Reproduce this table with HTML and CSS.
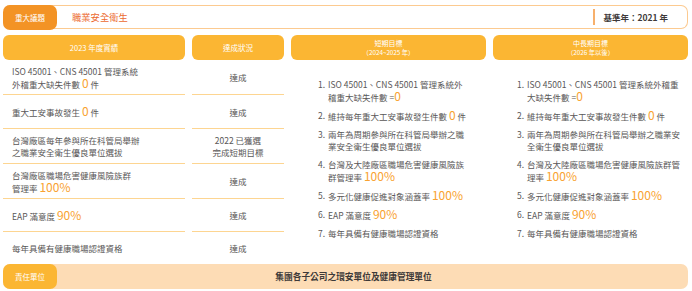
FILE: index.html
```html
<!DOCTYPE html>
<html lang="zh-Hant">
<head>
<meta charset="utf-8">
<link rel="stylesheet" href="styles.css">
</head>
<body>
<div class="page">
  <div class="topbar">
    <div class="tab">重大議題</div>
    <div class="title">職業安全衛生</div>
    <div class="sep"></div>
    <div class="base">基準年：2021 年</div>
  </div>

  <div class="table">
    <div class="th">2023 年度實績</div>
    <div class="th">達成狀況</div>
    <div class="th two"><span>短期目標</span><span class="sub">（2024~2025 年）</span></div>
    <div class="th two"><span>中長期目標</span><span class="sub">（2026 年以後）</span></div>

    <div class="cell c1 r1"><p>ISO 45001、CNS 45001 管理系統<br>外稽重大缺失件數 <span class="num">0</span> 件</p></div>
    <div class="cell c2 r1"><p>達成</p></div>

    <div class="cell c1 r2"><p>重大工安事故發生 <span class="num">0</span> 件</p></div>
    <div class="cell c2 r2"><p>達成</p></div>

    <div class="cell c1 r3"><p>台灣廠區每年參與所在科管局舉辦<br>之職業安全衛生優良單位選拔</p></div>
    <div class="cell c2 r3"><p>2022 已獲選<br>完成短期目標</p></div>

    <div class="cell c1 r4"><p>台灣廠區職場危害健康風險族群<br>管理率 <span class="num">100%</span></p></div>
    <div class="cell c2 r4"><p>達成</p></div>

    <div class="cell c1 r5"><p>EAP 滿意度 <span class="num">90%</span></p></div>
    <div class="cell c2 r5"><p>達成</p></div>

    <div class="cell c1 r6 last"><p>每年具備有健康職場認證資格</p></div>
    <div class="cell c2 r6 last"><p>達成</p></div>

    <div class="goals short">
      <ul class="list">
        <li><span class="n">1.</span><span class="t">ISO 45001、CNS 45001 管理系統外稽重大缺失件數 =<span class="num">0</span></span></li>
        <li><span class="n">2.</span><span class="t">維持每年重大工安事故發生件數 <span class="num">0</span> 件</span></li>
        <li><span class="n">3.</span><span class="t">兩年為周期參與所在科管局舉辦之職業安全衛生優良單位選拔</span></li>
        <li><span class="n">4.</span><span class="t">台灣及大陸廠區職場危害健康風險族群管理率 <span class="num">100%</span></span></li>
        <li><span class="n">5.</span><span class="t">多元化健康促進對象涵蓋率 <span class="num">100%</span></span></li>
        <li><span class="n">6.</span><span class="t">EAP 滿意度 <span class="num">90%</span></span></li>
        <li><span class="n">7.</span><span class="t">每年具備有健康職場認證資格</span></li>
      </ul>
    </div>

    <div class="goals long">
      <ul class="list">
        <li><span class="n">1.</span><span class="t">ISO 45001、CNS 45001 管理系統外稽重大缺失件數 =<span class="num">0</span></span></li>
        <li><span class="n">2.</span><span class="t">維持每年重大工安事故發生件數 <span class="num">0</span> 件</span></li>
        <li><span class="n">3.</span><span class="t">兩年為周期參與所在科管局舉辦之職業安全衛生優良單位選拔</span></li>
        <li><span class="n">4.</span><span class="t">台灣及大陸廠區職場危害健康風險族群管理率 <span class="num">100%</span></span></li>
        <li><span class="n">5.</span><span class="t">多元化健康促進對象涵蓋率 <span class="num">100%</span></span></li>
        <li><span class="n">6.</span><span class="t">EAP 滿意度 <span class="num">90%</span></span></li>
        <li><span class="n">7.</span><span class="t">每年具備有健康職場認證資格</span></li>
      </ul>
    </div>
  </div>

  <div class="footbar">
    <div class="tab tab-y">責任單位</div>
    <div class="owner">集團各子公司之環安單位及健康管理單位</div>
  </div>
</div>
</body>
</html>
```

FILE: styles.css
```css
* { box-sizing: border-box; }

html, body {
  margin: 0;
  padding: 0;
  background: #ffffff;
}

body {
  font-family: "Noto Sans CJK TC", "Noto Sans", sans-serif;
  color: #595757;
  font-size: 8.5px;
}

.page {
  width: 692px;
  height: 291px;
  padding: 5px 4px 0 3px;
}

/* top bar */
.topbar {
  display: flex;
  align-items: center;
  height: 24px;
  border: 1.5px solid #fcca90;
  border-left: none;
  border-radius: 7px;
}

.tab {
  align-self: stretch;
  margin: -1.5px 0;
  width: 54px;
  background: #f39325;
  border-radius: 7px;
  color: #ffffff;
  font-size: 7.5px;
  display: flex;
  align-items: center;
  justify-content: center;
}

.title {
  margin-left: 15px;
  color: #ec6a30;
  font-size: 9.3px;
  flex: 1;
}

.sep {
  width: 2px;
  height: 16px;
  background: #f7b06c;
  margin-right: 9px;
}

.base {
  color: #3e3a39;
  font-size: 8.5px;
  font-weight: 600;
  margin-right: 19px;
}

/* table */
.table {
  margin-top: 6px;
  display: grid;
  grid-template-columns: 182px 92px 195px 195px;
  grid-template-rows: 25px 35px 34px 35px 35px 33px 32px;
  column-gap: 7px;
}

.th {
  background: #fbb633;
  border-radius: 6px;
  color: #ffffff;
  font-size: 7.5px;
  display: flex;
  align-items: center;
  justify-content: center;
}

.th.two {
  flex-direction: column;
  font-size: 7px;
  line-height: 9px;
}

.th .sub {
  font-size: 6.3px;
}

.cell {
  border-bottom: 1.5px solid #fdd591;
  line-height: 12px;
  display: flex;
  align-items: center;
}

.cell p {
  margin: 0;
}

.cell.last { border-bottom: none; }

.c1 {
  grid-column: 1;
  padding-left: 9px;
}

.c2 {
  grid-column: 2;
  justify-content: center;
  text-align: center;
}

.r1 { grid-row: 2; }
.r2 { grid-row: 3; }
.r3 { grid-row: 4; }
.r4 { grid-row: 5; }
.r5 { grid-row: 6; }
.r6 { grid-row: 7; }

.num {
  color: #f9a230;
  font-size: 12px;
  line-height: 11px;
}

.goals {
  grid-row: 2 / 8;
  padding-top: 18px;
}

.goals.short {
  grid-column: 3;
  padding-left: 27px;
  padding-right: 20px;
}

.goals.long {
  grid-column: 4;
  padding-left: 24px;
  padding-right: 5px;
}

.list {
  list-style: none;
  margin: 0;
  padding: 0;
}

.list li {
  display: flex;
  line-height: 12px;
  margin-bottom: 6px;
}

.list .n {
  flex: 0 0 10px;
}

.list .t {
  flex: 1;
}

/* footer bar */
.footbar {
  display: flex;
  align-items: center;
  height: 25px;
  background: #fddcb5;
  border-radius: 7px;
}

.tab-y {
  margin: 0;
  background: #fbb633;
}

.owner {
  flex: 1;
  text-align: center;
  padding-right: 38px;
  color: #3e3a39;
  font-weight: 700;
  font-size: 8.7px;
}
```
